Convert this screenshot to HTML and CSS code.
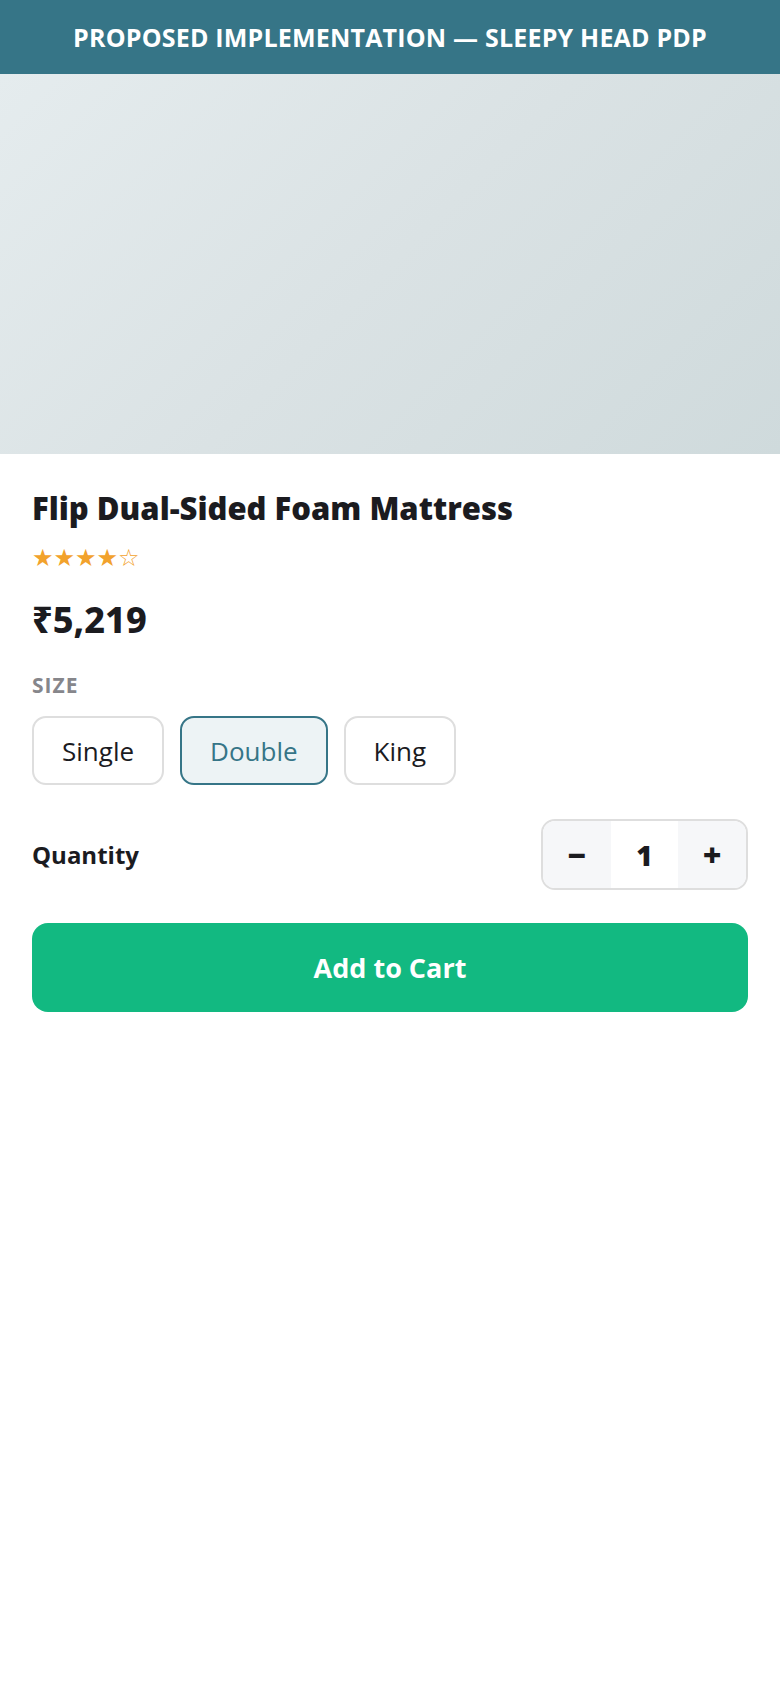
FILE: index.html
```html
<!DOCTYPE html>
<html lang="en">
<head>
<meta charset="utf-8">
<title>Sleepy Head PDP</title>
<link rel="stylesheet" href="styles.css">
</head>
<body>
<header class="topbar">PROPOSED IMPLEMENTATION — SLEEPY HEAD PDP</header>
<div class="hero"></div>
<main class="content">
  <h1 class="title">Flip Dual-Sided Foam Mattress</h1>
  <div class="stars">★★★★☆</div>
  <div class="price">₹5,219</div>
  <div class="label">SIZE</div>
  <div class="sizes">
    <button class="size">Single</button>
    <button class="size size-active">Double</button>
    <button class="size">King</button>
  </div>
  <div class="qty-row">
    <span class="qty-label">Quantity</span>
    <div class="stepper">
      <button class="step">−</button>
      <span class="qty-value">1</span>
      <button class="step">+</button>
    </div>
  </div>
  <button class="cart">Add to Cart</button>
</main>
</body>
</html>
```

FILE: styles.css
```css
* { box-sizing: border-box; }
html, body { margin: 0; padding: 0; background: #ffffff; }
body {
  font-family: "Open Sans", "Noto Sans", sans-serif;
  color: #1b1b1f;
}
.topbar {
  height: 74px;
  background: #367587;
  color: #ffffff;
  font-weight: 700;
  font-size: 25px;
  letter-spacing: 0.2px;
  display: flex;
  align-items: center;
  justify-content: center;
}
.hero {
  height: 380px;
  background: linear-gradient(135deg, #e5ecee 0%, #dae2e4 50%, #cfdadc 100%);
}
.content {
  padding: 36px 32px 0;
  display: flex;
  flex-direction: column;
}
.title {
  margin: 0;
  font-size: 31px;
  font-weight: 800;
  line-height: 36px;
  color: #1b1b1f;
}
.stars {
  margin-top: 20px;
  font-family: "DejaVu Sans", sans-serif;
  color: #f2a22c;
  font-size: 24px;
  line-height: 24px;
  letter-spacing: 0;
}
.price {
  margin-top: 30px;
  font-size: 36px;
  font-weight: 800;
  line-height: 40px;
  font-family: "Noto Sans", "Open Sans", sans-serif;
}
.label {
  margin-top: 33px;
  font-size: 21px;
  font-weight: 700;
  line-height: 24px;
  letter-spacing: 1px;
  color: #86868b;
}
.sizes {
  margin-top: 19px;
  display: flex;
  gap: 16px;
}
.size {
  height: 69px;
  padding: 0 28px;
  border: 2px solid #dedede;
  border-radius: 14px;
  background: #ffffff;
  font-family: inherit;
  font-size: 26px;
  color: #1b1b1f;
}
.size-active {
  border-color: #367587;
  background: #edf3f5;
  color: #367587;
}
.qty-row {
  margin-top: 34px;
  display: flex;
  align-items: center;
  justify-content: space-between;
}
.qty-label {
  font-size: 24px;
  font-weight: 700;
}
.stepper {
  display: flex;
  width: 207px;
  height: 71px;
  border: 2px solid #dedede;
  border-radius: 14px;
  overflow: hidden;
}
.step, .qty-value {
  flex: 1 1 0;
  min-width: 0;
  padding: 0;
  display: flex;
  align-items: center;
  justify-content: center;
  font-family: inherit;
  font-size: 28px;
  font-weight: 800;
  color: #1b1b1f;
  border: 0;
}
.step { background: #f6f7f9; font-size: 32px; }
.qty-value { background: #ffffff; }
.cart {
  margin-top: 33px;
  height: 89px;
  border: 0;
  border-radius: 16px;
  background: #12b981;
  color: #ffffff;
  font-family: inherit;
  font-size: 27px;
  font-weight: 700;
}
```
